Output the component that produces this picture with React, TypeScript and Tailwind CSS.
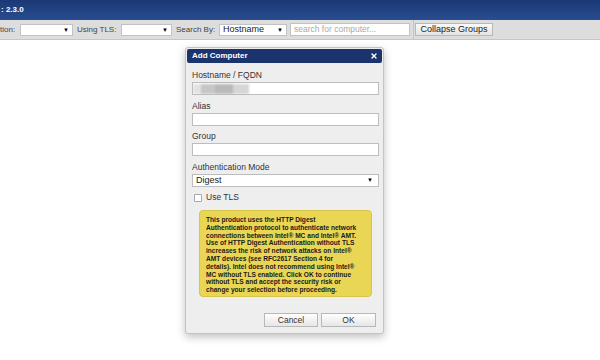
import { X } from 'lucide-react';

const font = { fontFamily: '"Liberation Sans", Arial, sans-serif' };

function Select({ w, value }: { w: string; value?: string }) {
  return (
    <div className={`${w} shrink-0 h-[12px] bg-white border border-[#c2c2c2] flex items-center justify-between pl-[3px] pr-[3px]`}>
      <span className="text-[9px] leading-none text-[#222]">{value}</span>
      <span className="text-[6px] leading-none text-black">▼</span>
    </div>
  );
}

function Field({ label, children }: { label: string; children: React.ReactNode }) {
  return (
    <div className="mb-[5.5px]">
      <div className="h-[10px] leading-[10px] text-[8.5px] text-[#333]">{label}</div>
      <div className="mt-[2px]">{children}</div>
    </div>
  );
}

const Input = ({ children }: { children?: React.ReactNode }) => (
  <div className="h-[13px] w-[187px] bg-white border border-[#bdbdbd] relative overflow-hidden">{children}</div>
);

const warning = [
  'This product uses the HTTP Digest',
  'Authentication protocol to authenticate network',
  'connections between Intel® MC and Intel® AMT.',
  'Use of HTTP Digest Authentication without TLS',
  'increases the risk of network attacks on Intel®',
  'AMT devices (see RFC2617 Section 4 for',
  'details). Intel does not recommend using Intel®',
  'MC without TLS enabled. Click OK to continue',
  'without TLS and accept the security risk or',
  'change your selection before proceeding.',
];

export default function App() {
  return (
    <div className="relative w-[600px] h-[360px] overflow-hidden bg-white" style={font}>
      {/* header */}
      <div className="h-[20px] bg-linear-to-b from-[#1b3775] to-[#294d90] flex items-center pl-[1px]">
        <span className="text-[8px] font-bold text-white whitespace-nowrap">: 2.3.0</span>
      </div>

      {/* toolbar */}
      <div className="h-[20px] bg-[#dddddd] border-b border-[#c6c6c6] flex items-center text-[8px] text-[#444] whitespace-nowrap">
        <span className="w-[20px] shrink-0">tion:</span>
        <Select w="w-[53px]" />
        <span className="w-[48px] shrink-0 pl-[4px]">Using TLS:</span>
        <Select w="w-[51px]" />
        <span className="w-[47px] shrink-0 pl-[4px]">Search By:</span>
        <Select w="w-[68px]" value="Hostname" />
        <div className="ml-[3px] w-[120px] shrink-0 h-[13px] bg-white border border-[#c2c2c2] flex items-center px-[3px]">
          <span className="text-[8.5px] text-[#aaa]">search for computer...</span>
        </div>
        <div className="ml-[3px] h-[20px] w-px bg-[#c4c4c4]" />
        <button className="ml-[1px] w-[78px] shrink-0 h-[13px] bg-linear-to-b from-[#fafafa] to-[#e4e4e4] border border-[#b8b8b8] text-[9px] text-[#222] leading-none">
          Collapse Groups
        </button>
      </div>

      {/* dialog */}
      <div className="absolute left-[185px] top-[47px] w-[199px] h-[287px] bg-[#eeeeee] border border-[#c4c4c4] rounded-[3px] p-[1px] shadow-[0_3px_8px_rgba(0,0,0,0.25)]">
        <div className="h-[14px] rounded-[2px] bg-[#1c346d] flex items-center justify-between pl-[5px] pr-[4px]">
          <span className="text-[8px] font-bold text-white">Add Computer</span>
          <X className="w-[8px] h-[8px] text-white" strokeWidth={4} />
        </div>
        <div className="pl-[5px] pt-[7px]">
          <Field label="Hostname / FQDN">
            <Input>
              <div className="absolute left-[0px] top-[1px] flex h-[10px] blur-[1.2px]">
                <div className="w-[8px] bg-[#e2e2e2]" />
                <div className="w-[14px] bg-[#c6c6c6]" />
                <div className="w-[18px] bg-[#b9b9b9]" />
                <div className="w-[16px] bg-[#d6d6d6]" />
              </div>
            </Input>
          </Field>
          <Field label="Alias">
            <Input />
          </Field>
          <Field label="Group">
            <Input />
          </Field>
          <div>
            <div className="h-[10px] leading-[10px] text-[8.5px] text-[#333]">Authentication Mode</div>
            <div className="mt-[2px] h-[13px] w-[187px] bg-white border border-[#bdbdbd] flex items-center justify-between pl-[3px] pr-[5px]">
              <span className="text-[9px] text-[#222] leading-none">Digest</span>
              <span className="text-[6px] text-black leading-none">▼</span>
            </div>
          </div>
          <div className="mt-[6.5px] h-[9px] flex items-center pl-[2px]">
            <div className="w-[8px] h-[8px] bg-white border border-[#a8a8a8] rounded-[1px]" />
            <span className="ml-[4px] text-[8.5px] text-[#333] leading-none">Use TLS</span>
          </div>
          <div className="mt-[8px] ml-[7px] w-[173px] h-[87px] rounded-[4px] bg-[#ead655] border border-[#d8c448] pl-[6px] pt-[5px]">
            {warning.map((line) => (
              <div key={line} className="text-[6.6px] leading-[7.8px] font-bold text-[#1a1a1a] whitespace-nowrap">
                {line}
              </div>
            ))}
          </div>
          <div className="mt-[16px] flex justify-end gap-[3px] pr-[6px]">
            <button className="w-[54px] h-[14px] bg-linear-to-b from-white to-[#e6e6e6] border border-[#b8b8b8] text-[8.5px] text-[#333] leading-none">
              Cancel
            </button>
            <button className="w-[55px] h-[14px] bg-linear-to-b from-white to-[#e6e6e6] border border-[#b8b8b8] text-[8.5px] text-[#333] leading-none">
              OK
            </button>
          </div>
        </div>
      </div>
    </div>
  );
}
